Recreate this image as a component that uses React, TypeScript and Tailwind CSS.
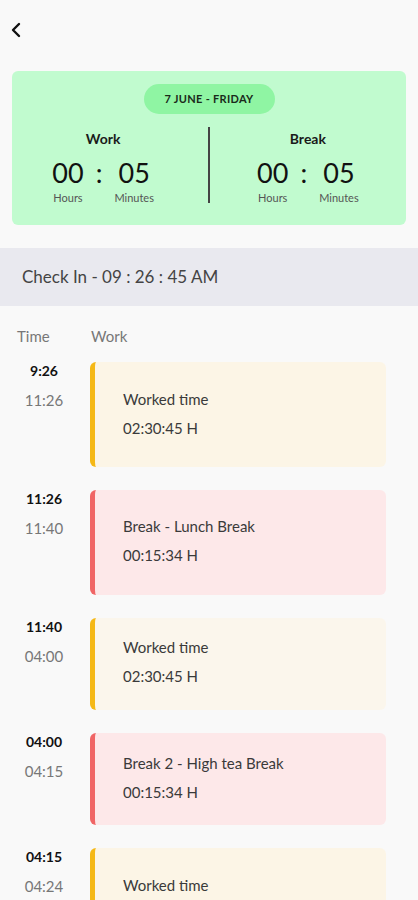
import React from "react";

const font = { fontFamily: "Lato, 'Open Sans', sans-serif" };

type Entry = {
  start: string;
  end: string;
  title: string;
  dur: string;
  kind: "work" | "break";
  h: string;
  pt: string;
  bg: string;
};

const entries: Entry[] = [
  { start: "9:26", end: "11:26", title: "Worked time", dur: "02:30:45 H", kind: "work", h: "h-[105px]", pt: "pt-[30px]", bg: "bg-[#fcf5e6]" },
  { start: "11:26", end: "11:40", title: "Break - Lunch Break", dur: "00:15:34 H", kind: "break", h: "h-[105px]", pt: "pt-[29px]", bg: "bg-[#fde8e9]" },
  { start: "11:40", end: "04:00", title: "Worked time", dur: "02:30:45 H", kind: "work", h: "h-[92px]", pt: "pt-[22px]", bg: "bg-[#fbf6ec]" },
  { start: "04:00", end: "04:15", title: "Break 2 - High tea Break", dur: "00:15:34 H", kind: "break", h: "h-[92px]", pt: "pt-[23px]", bg: "bg-[#fde8e9]" },
  { start: "04:15", end: "04:24", title: "Worked time", dur: "02:30:45 H", kind: "work", h: "h-[105px]", pt: "pt-[30px]", bg: "bg-[#fcf5e6]" },
];

function Counter({ label }: { label: string }) {
  return (
    <div className="flex flex-col items-center">
      <div className="text-[14px] font-bold text-[#1a1a1a] leading-none">{label}</div>
      <div className="flex items-start mt-[13px]">
        <div className="flex flex-col items-center">
          <div className="text-[27px] leading-none text-[#111]">00</div>
          <div className="text-[11px] text-[#555] mt-[6px] leading-none">Hours</div>
        </div>
        <div className="text-[27px] leading-none text-[#111] mx-[12px]">:</div>
        <div className="flex flex-col items-center">
          <div className="text-[27px] leading-none text-[#111]">05</div>
          <div className="text-[11px] text-[#555] mt-[6px] leading-none">Minutes</div>
        </div>
      </div>
    </div>
  );
}

export default function App() {
  return (
    <div className="w-[418px] h-[900px] bg-[#f9f9f9] overflow-hidden" style={font}>
      <div className="h-[71px] pl-[10px] pt-[22px]">
        <svg width="14" height="16" viewBox="0 0 14 16" fill="none">
          <path d="M9 2 L3 8 L9 14" stroke="#111" strokeWidth="2.4" strokeLinecap="round" strokeLinejoin="round" />
        </svg>
      </div>
      <div className="mx-[12px] h-[154px] rounded-[6px] bg-[#c1fbcf] flex flex-col items-center pt-[13px]">
        <div className="w-[131px] h-[30px] rounded-full bg-[#8ff5a3] flex items-center justify-center text-[11px] font-bold text-[#1a2a1a] tracking-[0.3px]">
          7 JUNE - FRIDAY
        </div>
        <div className="w-full flex mt-[13px]">
          <div className="flex-1 basis-0 flex justify-center pt-[5px]">
            <div className="mr-[14px]">
              <Counter label="Work" />
            </div>
          </div>
          <div className="w-[1.5px] h-[76px] bg-[#444]" />
          <div className="flex-1 basis-0 flex justify-center pt-[5px]">
            <Counter label="Break" />
          </div>
        </div>
      </div>
      <div className="mt-[23px] h-[58px] bg-[#e9e9ef] flex items-center pl-[22px] text-[17px] text-[#444]">
        Check In - 09 : 26 : 45 AM
      </div>
      <div className="flex pt-[23px] text-[15px] text-[#777] leading-none">
        <div className="w-[91px] pl-[17px]">Time</div>
        <div>Work</div>
      </div>
      <div className="flex flex-col gap-[23px] mt-[18px]">
        {entries.map((e, i) => (
          <div key={i} className="flex">
            <div className="w-[72px] pl-[16px] flex flex-col items-center">
              <div className="text-[14px] font-bold text-[#111] leading-none mt-[2px]">{e.start}</div>
              <div className="text-[15px] text-[#777] leading-none mt-[15px]">{e.end}</div>
            </div>
            <div
              className={`ml-[18px] w-[296px] ${e.h} shrink-0 rounded-[6px] border-l-[5px] ${e.bg} ${
                e.kind === "work" ? "border-[#f5b816]" : "border-[#f06565]"
              } pl-[28px] ${e.pt} text-[15px] text-[#3a3a3a]`}
            >
              <div className="leading-none">{e.title}</div>
              <div className="leading-none mt-[14px]">{e.dur}</div>
            </div>
          </div>
        ))}
      </div>
    </div>
  );
}
